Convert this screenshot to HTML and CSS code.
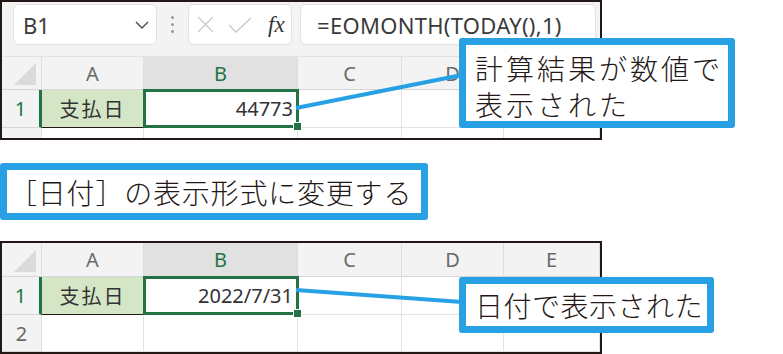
FILE: index.html
```html
<!DOCTYPE html>
<html lang="ja">
<head>
    <meta charset="UTF-8">
    <title>EOMONTH</title>
    <link rel="stylesheet" href="styles.css">
</head>
<body>
<div class="page">

    <div class="sheet top">
        <div class="toolbar">
            <div class="namebox">
                <span>B1</span>
                <svg width="14" height="8" viewBox="0 0 14 8"><path d="M1 1 L7 7 L13 1" fill="none" stroke="#555" stroke-width="1.5"/></svg>
            </div>
            <div class="dots"><i></i><i></i><i></i></div>
            <div class="fxbox">
                <svg width="17" height="17" viewBox="0 0 17 17"><path d="M1 1 L16 16 M16 1 L1 16" stroke="#c9c9c9" stroke-width="1.3"/></svg>
                <svg width="24" height="16" viewBox="0 0 24 16"><path d="M1 8 L8 15 L23 1" fill="none" stroke="#c9c9c9" stroke-width="1.3"/></svg>
                <span class="fx">fx</span>
            </div>
            <div class="formula">=EOMONTH(TODAY(),1)</div>
        </div>
        <div class="grid">
            <div class="corner"></div>
            <div class="colhead">A</div>
            <div class="colhead sel">B</div>
            <div class="colhead">C</div>
            <div class="colhead">D</div>
            <div class="colhead">E</div>

            <div class="rowhead sel">1</div>
            <div class="cell label">支払日</div>
            <div class="cell num active">44773</div>
            <div class="cell"></div>
            <div class="cell"></div>
            <div class="cell"></div>

            <div class="rowhead">2</div>
            <div class="cell"></div>
            <div class="cell"></div>
            <div class="cell"></div>
            <div class="cell"></div>
            <div class="cell"></div>
        </div>
    </div>

    <div class="step">［日付］の表示形式に変更する</div>

    <div class="sheet bottom">
        <div class="grid">
            <div class="corner"></div>
            <div class="colhead">A</div>
            <div class="colhead sel">B</div>
            <div class="colhead">C</div>
            <div class="colhead">D</div>
            <div class="colhead">E</div>

            <div class="rowhead sel">1</div>
            <div class="cell label">支払日</div>
            <div class="cell num active">2022/7/31</div>
            <div class="cell"></div>
            <div class="cell"></div>
            <div class="cell"></div>

            <div class="rowhead">2</div>
            <div class="cell"></div>
            <div class="cell"></div>
            <div class="cell"></div>
            <div class="cell"></div>
            <div class="cell"></div>
        </div>
    </div>

    <!-- 引き出し線と吹き出し -->
    <svg class="leaders" width="783" height="354" viewBox="0 0 783 354">
        <line x1="296" y1="108" x2="462" y2="75" stroke="#27a1e3" stroke-width="4"/>
        <line x1="296" y1="290" x2="462" y2="302" stroke="#27a1e3" stroke-width="4"/>
    </svg>
    <div class="callout c1">計算結果が数値で<br>表示された</div>
    <div class="callout c2">日付で表示された</div>

</div>
</body>
</html>
```

FILE: styles.css
```css
body {
    margin: 0;
    background: #fff;
    font-family: "Noto Sans", "Noto Sans CJK JP", sans-serif;
}

.page {
    position: relative;
    width: 783px;
    height: 354px;
    overflow: hidden;
}

.sheet {
    width: 602px;
    box-sizing: border-box;
    border: 2px solid #231815;
    overflow: hidden;
    background: #fff;
}

.sheet.top {
    height: 140px;
}

.sheet.bottom {
    height: 113px;
    margin-top: 21px;
}

.toolbar {
    display: flex;
    align-items: flex-start;
    height: 55px;
    box-sizing: border-box;
    padding: 2px 4px 0 11px;
    background: #f3f3f3;
    border-bottom: 1px solid #e2e2e2;
}

.namebox,
.fxbox,
.formula {
    height: 41px;
    box-sizing: border-box;
    background: #fff;
    border: 1px solid #e3e3e3;
    border-radius: 6px;
    display: flex;
    align-items: center;
}

.namebox {
    width: 144px;
    padding: 0 7px 0 9px;
    justify-content: space-between;
    font-size: 22px;
    color: #3a3a3a;
}

.dots {
    width: 31px;
    height: 41px;
    display: flex;
    flex-direction: column;
    align-items: center;
    justify-content: center;
    gap: 4px;
}

.dots i {
    width: 3px;
    height: 3px;
    border-radius: 50%;
    background: #9a9a9a;
}

.fxbox {
    width: 104px;
    padding: 0 6px 0 8px;
    gap: 14px;
}

.fx {
    font-family: "Liberation Serif", serif;
    font-style: italic;
    font-size: 23px;
    color: #333;
    margin-left: 2px;
}

.formula {
    flex: 1;
    margin-left: 8px;
    padding-left: 16px;
    font-size: 22px;
    letter-spacing: 0.3px;
    color: #3a3a3a;
}

.grid {
    display: grid;
    grid-template-columns: 40px 102px 154px 104px 102px 1fr;
}

.top .grid {
    grid-template-rows: 33px 38px 37px;
}

.bottom .grid {
    grid-template-rows: 34px 38px 37px;
}

.corner,
.colhead,
.rowhead {
    background: #f3f3f3;
    color: #6a6a6a;
    font-size: 20px;
    display: flex;
    align-items: center;
    justify-content: center;
    box-sizing: border-box;
    border-right: 1px solid #dedede;
    border-bottom: 1px solid #d6d6d6;
}

.corner {
    position: relative;
}

.corner::after {
    content: "";
    position: absolute;
    right: 5px;
    bottom: 4px;
    border-style: solid;
    border-width: 0 0 22px 22px;
    border-color: transparent transparent #dadada transparent;
}

.colhead.sel {
    background: #e1e1e1;
    color: #217346;
}

.rowhead.sel {
    color: #217346;
    border-right: 3px solid #217346;
}

.cell {
    box-sizing: border-box;
    border-right: 1px solid #e2e2e2;
    border-bottom: 1px solid #e2e2e2;
    font-size: 20px;
    color: #333;
    display: flex;
    align-items: center;
}

.cell.label {
    background: #d5e6c7;
    justify-content: center;
    border-bottom: 1px solid #231815;
    font-family: "Noto Sans CJK JP", sans-serif;
    letter-spacing: 2px;
}

.cell.num {
    justify-content: flex-end;
    padding-right: 4px;
}

.cell.active {
    position: relative;
}

.cell.active::after {
    content: "";
    position: absolute;
    left: -1px;
    top: -1px;
    right: -2px;
    bottom: -1px;
    border: 3px solid #217346;
}

.cell.active::before {
    content: "";
    position: absolute;
    right: -5px;
    bottom: -4px;
    width: 7px;
    height: 7px;
    background: #217346;
    border: 1px solid #fff;
    z-index: 1;
}

.step {
    width: 428px;
    height: 57px;
    box-sizing: border-box;
    margin-top: 23px;
    border: 7px solid #27a1e3;
    border-radius: 3px;
    padding-left: 2px;
    display: flex;
    align-items: center;
    font-family: "Noto Sans CJK JP", sans-serif;
    font-weight: 300;
    font-size: 28px;
    letter-spacing: 0.8px;
    color: #231815;
}

.leaders {
    position: absolute;
    left: 0;
    top: 0;
}

.callout {
    position: absolute;
    box-sizing: border-box;
    border: 7px solid #27a1e3;
    border-radius: 3px;
    background: #fff;
    padding-left: 9px;
    font-family: "Noto Sans CJK JP", sans-serif;
    font-weight: 300;
    font-size: 28px;
    color: #231815;
}

.c1 {
    left: 459px;
    top: 38px;
    width: 276px;
    height: 90px;
    line-height: 36px;
    padding-top: 5px;
    letter-spacing: 3px;
}

.c2 {
    left: 459px;
    top: 277px;
    width: 255px;
    height: 56px;
    line-height: 42px;
    letter-spacing: 0.5px;
}
```
